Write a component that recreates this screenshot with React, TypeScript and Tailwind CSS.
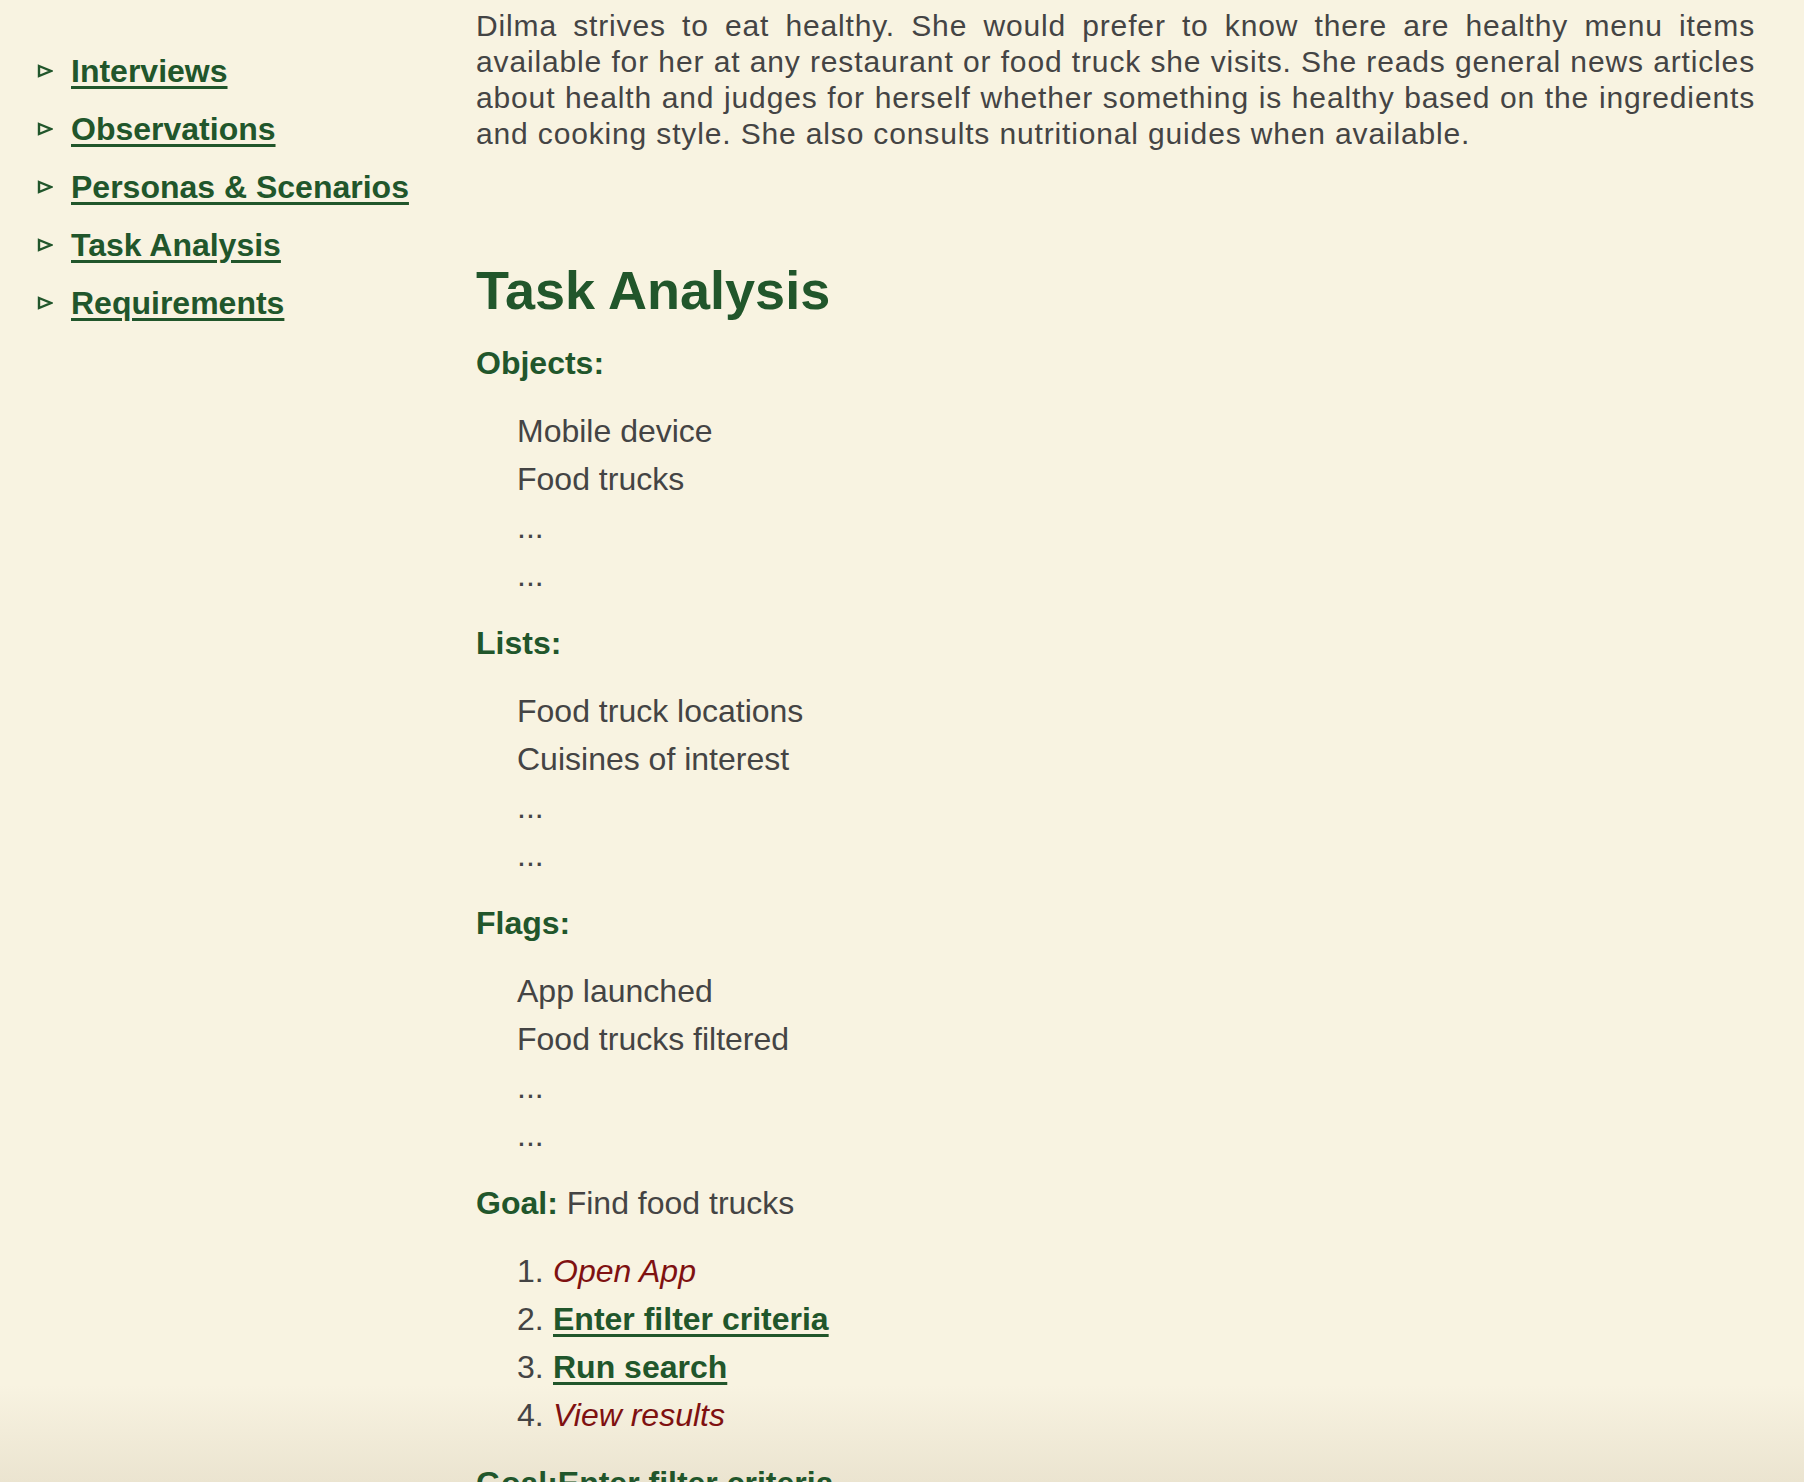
const navLinks = ['Interviews', 'Observations', 'Personas & Scenarios', 'Task Analysis', 'Requirements']

const sections = [
  { title: 'Objects:', items: ['Mobile device', 'Food trucks', '...', '...'] },
  { title: 'Lists:', items: ['Food truck locations', 'Cuisines of interest', '...', '...'] },
  { title: 'Flags:', items: ['App launched', 'Food trucks filtered', '...', '...'] },
]

const steps = [
  { text: 'Open App', link: false },
  { text: 'Enter filter criteria', link: true },
  { text: 'Run search', link: true },
  { text: 'View results', link: false },
]

function Triangle() {
  return (
    <svg width="16" height="14" viewBox="0 0 16 14" className="shrink-0">
      <polygon points="2,2 14,7 2,12" fill="none" stroke="#21562b" strokeWidth="2.4" strokeLinejoin="miter" />
    </svg>
  )
}

export default function App() {
  return (
    <div className="h-[1482px] overflow-hidden bg-[linear-gradient(to_bottom,#f8f3e1_1385px,#ebe4d0_1482px)] font-['Liberation_Sans',Arial,sans-serif] text-[#444444]">
      <div className="flex">
        {/* Side nav */}
        <nav className="w-[476px] shrink-0 pl-[37px] pt-[42px]">
          <ul>
            {navLinks.map((l) => (
              <li key={l} className="flex h-[58px] items-center gap-[18px]">
                <Triangle />
                <a
                  href="#"
                  className="text-[32px] font-bold leading-[58px] text-[#21562b] underline decoration-[3px] underline-offset-[4px]"
                >
                  {l}
                </a>
              </li>
            ))}
          </ul>
        </nav>

        {/* Main column */}
        <main className="flex-1 pr-[49px] pt-[8px]">
          <div className="text-[30px] leading-[36px] tracking-[0.85px]">
            <p className="text-justify [text-align-last:justify]">
              Dilma strives to eat healthy. She would prefer to know there are healthy menu items
            </p>
            <p className="text-justify [text-align-last:justify]">
              available for her at any restaurant or food truck she visits. She reads general news articles
            </p>
            <p className="text-justify [text-align-last:justify]">
              about health and judges for herself whether something is healthy based on the ingredients
            </p>
            <p>and cooking style. She also consults nutritional guides when available.</p>
          </div>

          <h2 className="mt-[106px] text-[54px] font-bold leading-[64px] text-[#21562b]">Task Analysis</h2>

          <div className="mt-[17px]">
            {sections.map((s) => (
              <section key={s.title}>
                <h3 className="mb-[20px] text-[32px] font-bold leading-[48px] text-[#21562b]">{s.title}</h3>
                <ul className="mb-[20px] pl-[41px]">
                  {s.items.map((it, i) => (
                    <li key={i} className="text-[32px] leading-[48px]">
                      {it}
                    </li>
                  ))}
                </ul>
              </section>
            ))}

            <h3 className="mb-[20px] text-[32px] leading-[48px]">
              <span className="font-bold text-[#21562b]">Goal:</span> Find food trucks
            </h3>
            <ol className="mb-[20px] pl-[41px]">
              {steps.map((s, i) => (
                <li key={s.text} className="flex text-[32px] leading-[48px]">
                  <span className="w-[36px] shrink-0">{i + 1}.</span>
                  {s.link ? (
                    <a href="#" className="font-bold text-[#21562b] underline decoration-[3px] underline-offset-[4px]">
                      {s.text}
                    </a>
                  ) : (
                    <em className="text-[#7f1111]">{s.text}</em>
                  )}
                </li>
              ))}
            </ol>

            <h3 className="text-[32px] font-bold leading-[48px] text-[#21562b]">
              Goal:<a href="#" className="underline decoration-[3px] underline-offset-[4px]">Enter filter criteria</a>
            </h3>
          </div>
        </main>
      </div>
    </div>
  )
}
